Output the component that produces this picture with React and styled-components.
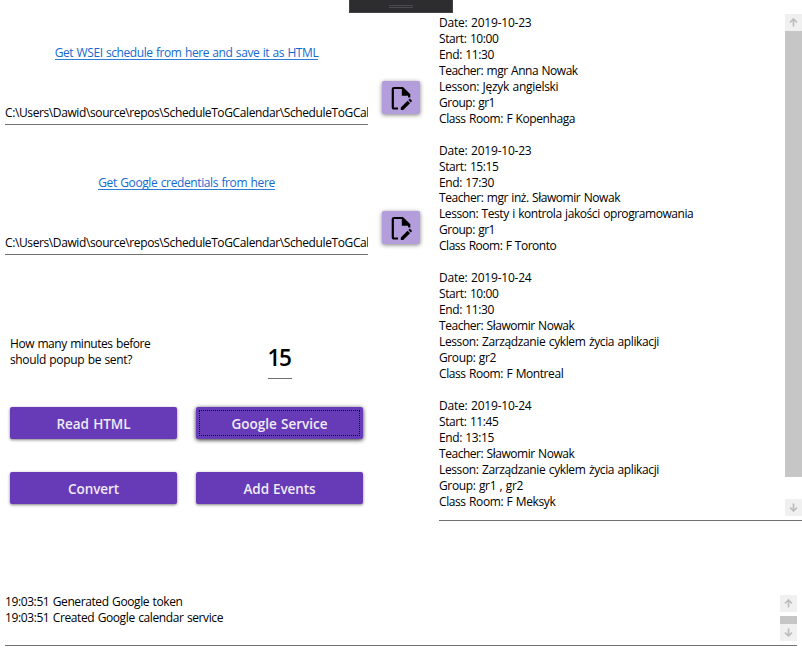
import React, { useLayoutEffect, useRef, useState } from "react";
import styled, { createGlobalStyle } from "styled-components";

const Global = createGlobalStyle`
  * { box-sizing: border-box; }
  body { margin: 0; background: #fff; overflow: hidden; }
`;

const Window = styled.main`
  position: relative;
  display: flex;
  flex-direction: column;
  width: 802px;
  height: 651px;
  background: #fff;
  color: #000;
  font: 12px/15.96px "Open Sans", "Noto Sans", sans-serif;
`;

const DebugHandle = styled.div`
  position: absolute;
  left: 349px;
  top: 0;
  width: 104px;
  height: 13px;
  display: grid;
  place-items: center;
  background: #2d2d30;
  border: 1px solid #434346;
  border-top: 0;
`;

const Grip = styled.span`
  width: 24px;
  height: 3px;
  border: solid #4b4b4f;
  border-width: 1px 0;
`;

const Upper = styled.div`
  display: flex;
  height: 521px;
`;

const Controls = styled.section`
  width: 439px;
  padding-top: 45px;
`;

const Source = styled.div`
  height: 130px;
`;

const LinkRow = styled.div`
  display: flex;
  justify-content: center;
  width: 373px;
  height: 36px;
`;

const Anchor = styled.a`
  height: 15px;
  color: #1469cf;
  line-height: 16px;
  border-bottom: 1px solid #2f7cd6;
`;

const FileRow = styled.div`
  display: flex;
  gap: 14px;
  height: 44px;
  padding-left: 5px;
`;

const PathField = styled.div`
  width: 363px;
  height: 44px;
  padding-top: 24px;
  overflow: hidden;
  border-bottom: 1px solid #707070;
`;

const IconButton = styled.button`
  display: grid;
  place-items: center;
  width: 38px;
  height: 33px;
  padding: 0;
  border: 0;
  border-radius: 2px;
  background: #b39ddb;
  box-shadow: 0 1px 4px rgba(0, 0, 0, 0.5);
`;

const Reminder = styled.div`
  display: flex;
  height: 71px;
  margin-top: 31px;
  padding-left: 10px;
`;

const Question = styled.div`
  width: 258px;
`;

const Minutes = styled.div`
  display: flex;
  align-items: flex-end;
  justify-content: center;
  width: 24px;
  height: 43px;
  padding: 0 2px 8px 0;
  border-bottom: 1px solid #707070;
  font-size: 22.5px;
  line-height: 24px;
  font-weight: 600;
`;

const Actions = styled.div`
  display: grid;
  grid-template-columns: 167px 167px;
  grid-auto-rows: 32px;
  gap: 33px 19px;
  padding: 0 10px;
`;

const ActionButton = styled.button`
  display: flex;
  align-items: center;
  justify-content: center;
  padding: 2px 0 0;
  border: 0;
  border-radius: 2px;
  background: #673ab7;
  color: #f0ebf8;
  font: 600 13.5px/18px "Open Sans", "Noto Sans", sans-serif;
  box-shadow: ${(p) => (p.$focused ? "0 1px 4px rgba(0,0,0,.85)" : "0 1px 3px rgba(0,0,0,.5)")};
  outline: ${(p) => (p.$focused ? "1px dotted #000" : "none")};
  outline-offset: -4px;
`;

const Schedule = styled.section`
  display: flex;
  justify-content: space-between;
  width: 363px;
  padding-top: 14px;
  border-bottom: 1px solid #707070;
`;

const Entries = styled.div`
  display: flex;
  flex-direction: column;
  gap: 15.96px;
  padding-top: 1px;
`;

const Entry = styled.div``;

const Line = styled.div`
  height: 15.96px;
  white-space: nowrap;
`;

const Log = styled.section`
  display: flex;
  justify-content: space-between;
  height: 51px;
  margin: 74px 5px 0;
  border-bottom: 1px solid #707070;
`;

const LogLines = styled.div`
  margin-top: -1px;
`;

const ScrollBar = styled.div`
  display: flex;
  flex-direction: column;
  width: 17px;
  height: ${(p) => p.$height}px;
`;

const ScrollArrow = styled.span`
  display: grid;
  place-items: center;
  width: 17px;
  height: 17px;
  background: #f0f0f0;
`;

const Thumb = styled.span`
  height: ${(p) => p.$height}px;
  margin: ${(p) => p.$before}px 0 ${(p) => p.$after}px;
  background: #c6c6c6;
`;

const Run = styled.span`
  display: inline-block;
  white-space: pre;
  word-spacing: 0.7px;
`;

/* Tracks a run of text so that it fills the given width. */
function Fit({ width, children }) {
  const ref = useRef(null);
  const [spacing, setSpacing] = useState(0);
  useLayoutEffect(() => {
    const node = ref.current;
    const previous = node.style.letterSpacing;
    node.style.letterSpacing = "0px";
    const natural = node.getBoundingClientRect().width;
    node.style.letterSpacing = previous;
    setSpacing((width - natural) / children.length);
  }, [width, children]);
  return (
    <Run ref={ref} style={{ letterSpacing: spacing }}>
      {children}
    </Run>
  );
}

function Arrow({ down }) {
  return (
    <svg width="9" height="9" viewBox="0 0 9 9" fill="none" stroke="#bdbdbd" strokeWidth="1.7">
      <path d={down ? "M4.5 .5V8M1 4.5 4.5 8 8 4.5" : "M4.5 8.5V1M1 4.5 4.5 1 8 4.5"} />
    </svg>
  );
}

function Scroller({ height, thumb, before, after }) {
  return (
    <ScrollBar $height={height}>
      <ScrollArrow><Arrow /></ScrollArrow>
      <Thumb $height={thumb} $before={before} $after={after} />
      <ScrollArrow><Arrow down /></ScrollArrow>
    </ScrollBar>
  );
}

function FileEditIcon() {
  return (
    <svg width="22" height="26" viewBox="0 0 22 26">
      <path d="M8 23.5H4Q2.8 23.5 2.8 22.3V4.2Q2.8 3 4 3H12.5L19.2 9.7V12.5" fill="none" stroke="#000" strokeWidth="2.2" />
      <path d="M11.8 2.5 20.2 10.7H11.8Z" />
      <path d="M10.8 22.6 17.6 15.8 20 18.2 13.2 25H10.8Z" />
      <path d="M18.4 15 19.3 14.1Q19.8 13.6 20.3 14.1L21.7 15.5Q22.2 16 21.7 16.5L20.8 17.4Z" />
    </svg>
  );
}

const PATH = "C:\\Users\\Dawid\\source\\repos\\ScheduleToGCalendar\\ScheduleToGCal";

const sources = [
  ["Get WSEI schedule from here and save it as HTML", 263.5],
  ["Get Google credentials from here", 176.5],
];

const actions = [
  ["Read HTML", 74],
  ["Google Service", 96],
  ["Convert", 51],
  ["Add Events", 72],
];

const entries = [
  [
    ["Date: 2019-10-23", 92.5],
    ["Start: 10:00", 59.5],
    ["End: 11:30", 55],
    ["Teacher: mgr Anna Nowak", 138.7],
    ["Lesson: Język angielski", 119.3],
    ["Group: gr1", 56],
    ["Class Room: F Kopenhaga", 136],
  ],
  [
    ["Date: 2019-10-23", 92.5],
    ["Start: 15:15", 59.5],
    ["End: 17:30", 55],
    ["Teacher: mgr inż. Sławomir Nowak", 181],
    ["Lesson: Testy i kontrola jakości oprogramowania", 254.3],
    ["Group: gr1", 56],
    ["Class Room: F Toronto", 117.3],
  ],
  [
    ["Date: 2019-10-24", 92.5],
    ["Start: 10:00", 59.5],
    ["End: 11:30", 55],
    ["Teacher: Sławomir Nowak", 135.3],
    ["Lesson: Zarządzanie cyklem życia aplikacji", 220],
    ["Group: gr2", 57],
    ["Class Room: F Montreal", 124.3],
  ],
  [
    ["Date: 2019-10-24", 92.5],
    ["Start: 11:45", 59.5],
    ["End: 13:15", 55],
    ["Teacher: Sławomir Nowak", 135.3],
    ["Lesson: Zarządzanie cyklem życia aplikacji", 220],
    ["Group: gr1 , gr2", 84],
    ["Class Room: F Meksyk", 116.3],
  ],
];

export default function App() {
  return (
    <>
      <Global />
      <Window>
        <Upper>
          <Controls>
            {sources.map(([label, width]) => (
              <Source key={label}>
                <LinkRow>
                  <Anchor><Fit width={width}>{label}</Fit></Anchor>
                </LinkRow>
                <FileRow>
                  <PathField><Fit width={364}>{PATH}</Fit></PathField>
                  <IconButton aria-label="Choose file"><FileEditIcon /></IconButton>
                </FileRow>
              </Source>
            ))}
            <Reminder>
              <Question>
                <Line><Fit width={140.3}>How many minutes before</Fit></Line>
                <Line><Fit width={122}>should popup be sent?</Fit></Line>
              </Question>
              <Minutes><Fit width={23}>15</Fit></Minutes>
            </Reminder>
            <Actions>
              {actions.map(([label, width]) => (
                <ActionButton key={label} $focused={label === "Google Service"}>
                  <Fit width={width}>{label}</Fit>
                </ActionButton>
              ))}
            </Actions>
          </Controls>
          <Schedule>
            <Entries>
              {entries.map((lines, i) => (
                <Entry key={i}>
                  {lines.map(([text, width]) => (
                    <Line key={text}><Fit width={width}>{text}</Fit></Line>
                  ))}
                </Entry>
              ))}
            </Entries>
            <Scroller height={502} thumb={446} before={0} after={22} />
          </Schedule>
        </Upper>
        <Log>
          <LogLines>
            <Line><Fit width={177.5}>19:03:51 Generated Google token</Fit></Line>
            <Line><Fit width={218}>19:03:51 Created Google calendar service</Fit></Line>
          </LogLines>
          <Scroller height={46} thumb={8} before={4} after={0} />
        </Log>
        <DebugHandle><Grip /></DebugHandle>
      </Window>
    </>
  );
}
